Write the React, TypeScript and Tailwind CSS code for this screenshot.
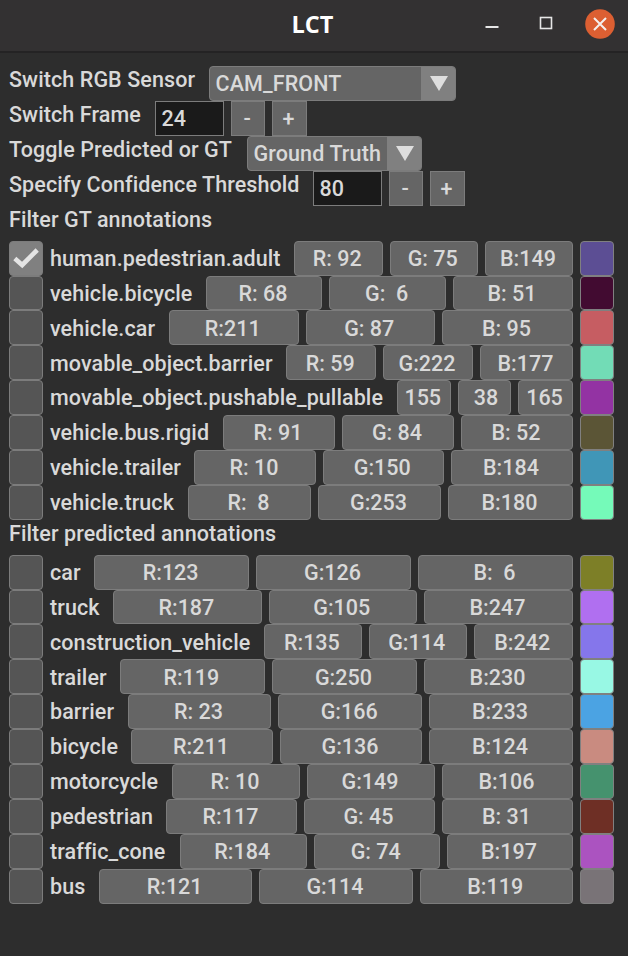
import React from "react";

type Row = { name: string; label: string; last: string; r: string; g: string; b: string; swatch: string; on?: boolean };

const truth: Row[] = [
  { name: "human.pedestrian.adult", label: "w-[244px]", last: "w-[88px]", r: "R: 92", g: "G: 75", b: "B:149", swatch: "bg-[#5c4e94]", on: true },
  { name: "vehicle.bicycle", label: "w-[155.5px]", last: "w-[120px]", r: "R: 68", g: "G:  6", b: "B: 51", swatch: "bg-[#420b31]" },
  { name: "vehicle.car", label: "w-[119px]", last: "w-[131px]", r: "R:211", g: "G: 87", b: "B: 95", swatch: "bg-[#c65d62]" },
  { name: "movable_object.barrier", label: "w-[236.2px]", last: "w-[93px]", r: "R: 59", g: "G:222", b: "B:177", swatch: "bg-[#72dcb6]" },
  { name: "movable_object.pushable_pullable", label: "w-[347px]", last: "w-[55px]", r: "155", g: " 38", b: "165", swatch: "bg-[#9333a3]" },
  { name: "vehicle.bus.rigid", label: "w-[173px]", last: "w-[112px]", r: "R: 91", g: "G: 84", b: "B: 52", swatch: "bg-[#5b5536]" },
  { name: "vehicle.trailer", label: "w-[144.2px]", last: "w-[122px]", r: "R: 10", g: "G:150", b: "B:184", swatch: "bg-[#4096b7]" },
  { name: "vehicle.truck", label: "w-[138px]", last: "w-[125px]", r: "R:  8", g: "G:253", b: "B:180", swatch: "bg-[#75fab9]" },
];

const predicted: Row[] = [
  { name: "car", label: "w-[44.2px]", last: "w-[155px]", r: "R:123", g: "G:126", b: "B:  6", swatch: "bg-[#7d7f27]" },
  { name: "truck", label: "w-[63.2px]", last: "w-[149px]", r: "R:187", g: "G:105", b: "B:247", swatch: "bg-[#b06ff0]" },
  { name: "construction_vehicle", label: "w-[214px]", last: "w-[99.5px]", r: "R:135", g: "G:114", b: "B:242", swatch: "bg-[#8576eb]" },
  { name: "trailer", label: "w-[69.8px]", last: "w-[149px]", r: "R:119", g: "G:250", b: "B:230", swatch: "bg-[#98f8e4]" },
  { name: "barrier", label: "w-[77.5px]", last: "w-[144px]", r: "R: 23", g: "G:166", b: "B:233", swatch: "bg-[#4ba3e3]" },
  { name: "bicycle", label: "w-[81px]", last: "w-[144px]", r: "R:211", g: "G:136", b: "B:124", swatch: "bg-[#c98b80]" },
  { name: "motorcycle", label: "w-[122px]", last: "w-[131px]", r: "R: 10", g: "G:149", b: "B:106", swatch: "bg-[#45926e]" },
  { name: "pedestrian", label: "w-[116px]", last: "w-[131px]", r: "R:117", g: "G: 45", b: "B: 31", swatch: "bg-[#6e2f25]" },
  { name: "traffic_cone", label: "w-[130px]", last: "w-[126px]", r: "R:184", g: "G: 74", b: "B:197", swatch: "bg-[#ab53c0]" },
  { name: "bus", label: "w-[49px]", last: "w-[153.5px]", r: "R:121", g: "G:114", b: "B:119", swatch: "bg-[#797377]" },
];

function Channel({ text, size }: { text: string; size: string }) {
  return (
    <button className={`h-full whitespace-pre rounded border border-[#7c7c7c] bg-[#656565] pr-[2px] pt-[1.5px] text-center ${size}`}>
      {text}
    </button>
  );
}

function AnnotationRow({ row }: { row: Row }) {
  return (
    <div className="flex h-[34.9px] w-[605px] shrink-0 items-center">
      <span
        className={`flex h-full w-[34px] shrink-0 items-center justify-center rounded border border-[#7c7c7c] ${row.on ? "bg-[#808080]" : "bg-[#555555]"}`}
      >
        {row.on && (
          <svg width="26" height="22" viewBox="0 0 26 22" fill="none" stroke="#e4e4e4" strokeWidth="4.6">
            <path d="M1.8 11.5 L9.2 18 L24.2 3" />
          </svg>
        )}
      </span>
      <span className={`ml-[7px] shrink-0 whitespace-nowrap pt-[1.5px] tracking-[0.09px] ${row.label}`}>{row.name}</span>
      <div className="flex h-full min-w-0 flex-1 gap-[7px]">
        <Channel text={row.r} size="min-w-0 flex-1" />
        <Channel text={row.g} size="min-w-0 flex-1" />
        <Channel text={row.b} size={`shrink-0 ${row.last}`} />
      </div>
      <span className={`ml-[7px] h-full w-[34px] shrink-0 rounded border border-[#808080] ${row.swatch}`} />
    </div>
  );
}

function Select({ value, width }: { value: string; width: string }) {
  return (
    <div className={`flex h-full overflow-hidden rounded border border-[#7c7c7c] bg-[#656565] ${width}`}>
      <span className="flex flex-1 items-center whitespace-nowrap pl-[5.5px] pt-[1.5px] tracking-[0.12px]">{value}</span>
      <span className="flex w-[34px] items-center justify-center bg-[#808080] pl-px">
        <svg width="18" height="15" viewBox="0 0 18 15">
          <path d="M0 0H18L9 15Z" fill="#dedede" />
        </svg>
      </span>
    </div>
  );
}

function Stepper({ value }: { value: string }) {
  return (
    <div className="flex h-full gap-[6.7px]">
      <span className="flex w-[69px] items-center border border-[#7c7c7c] bg-[#1a1a1a] pl-[5.5px] pt-[1.5px]">{value}</span>
      <button className="w-[34.7px] border border-[#7c7c7c] bg-[#656565] pr-[2px] pt-[1.5px]">-</button>
      <button className="w-[34.7px] border border-[#7c7c7c] bg-[#656565] pr-[2px] pt-[1.5px]">+</button>
    </div>
  );
}

function Setting({ label, width, children }: { label: string; width: string; children?: React.ReactNode }) {
  return (
    <div className="flex h-[34.9px] shrink-0">
      <span className={`shrink-0 whitespace-nowrap leading-[27px] tracking-[0.09px] ${width}`}>{label}</span>
      {children}
    </div>
  );
}

export default function App() {
  return (
    <div className="flex h-[956px] w-[628px] flex-col overflow-hidden bg-[#2d2d2d] font-['Roboto',sans-serif] text-[21.5px] font-medium leading-[28px] text-[#d9d9d9]">
      <header className="flex h-[53px] shrink-0 items-center border-b-2 border-[#242324] bg-[#333132]">
        <h1 className="ml-[200px] w-[225px] pb-[4px] text-center font-['Open_Sans',sans-serif] text-[23.5px] font-bold text-white">LCT</h1>
        <svg className="ml-[60px] mt-[2px]" width="14" height="14" viewBox="0 0 14 14">
          <path d="M0.5 7H13.5" stroke="#e6e6e6" strokeWidth="2" />
        </svg>
        <svg className="mb-[5px] ml-[40px]" width="14" height="14" viewBox="0 0 14 14">
          <rect x="1.5" y="1.5" width="11" height="11" fill="none" stroke="#e6e6e6" strokeWidth="1.6" />
        </svg>
        <svg className="mb-[4px] ml-[32px]" width="30" height="30" viewBox="0 0 30 30">
          <circle cx="15" cy="15" r="14.8" fill="#dc5f32" />
          <path d="M9 9L21 21M21 9L9 21" stroke="#f4f0ee" strokeWidth="2" />
        </svg>
      </header>
      <main className="flex flex-col pl-[9px] pt-[13.2px]">
        <Setting label="Switch RGB Sensor" width="w-[200px]">
          <Select value="CAM_FRONT" width="w-[247px]" />
        </Setting>
        <Setting label="Switch Frame" width="w-[146px]">
          <Stepper value="24" />
        </Setting>
        <Setting label="Toggle Predicted or GT" width="w-[238px]">
          <Select value="Ground Truth" width="w-[175px]" />
        </Setting>
        <Setting label="Specify Confidence Threshold" width="w-[304px]">
          <Stepper value="80" />
        </Setting>
        <Setting label="Filter GT annotations" width="w-auto" />
        {truth.map((row) => (
          <AnnotationRow key={row.name} row={row} />
        ))}
        <Setting label="Filter predicted annotations" width="w-auto" />
        {predicted.map((row) => (
          <AnnotationRow key={row.name} row={row} />
        ))}
      </main>
    </div>
  );
}
